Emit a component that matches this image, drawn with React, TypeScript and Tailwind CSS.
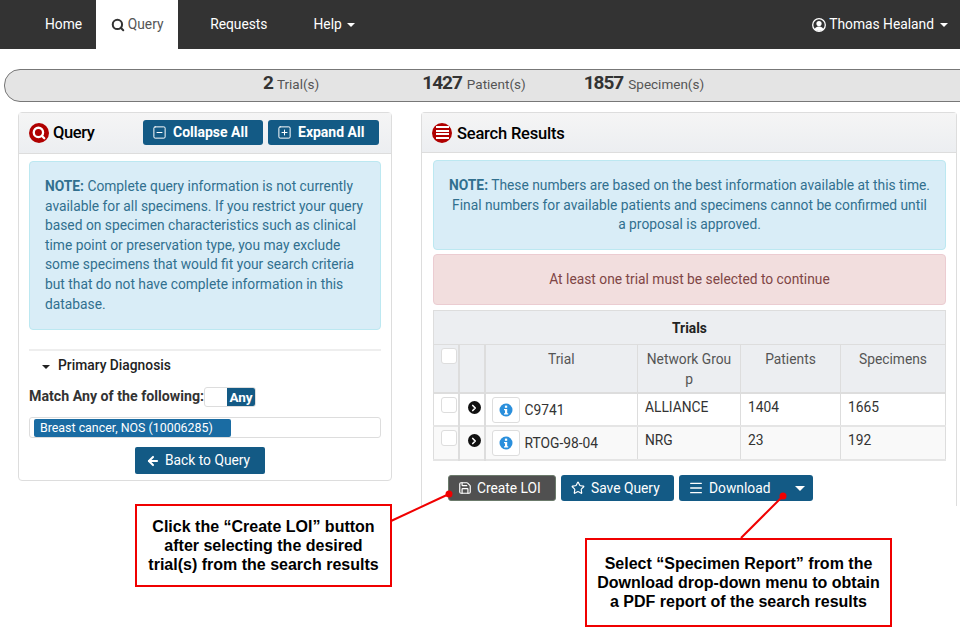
import React from 'react';
import { ArrowLeft, ChevronRight, Menu, Save, Search, SquareMinus, SquarePlus, Star } from 'lucide-react';

const Caret = ({ className = '' }: { className?: string }) => (
  <span className={`inline-block w-0 h-0 border-x-[4px] border-x-transparent border-t-[4px] ${className}`} />
);

const Check = () => <span className="block w-4 h-4 bg-white border border-[#ddd] rounded-[3px]" />;

const InfoDot = () => (
  <svg width="14" height="14" viewBox="0 0 14 14">
    <circle cx="7" cy="7" r="6.5" fill="#2a8fdc" />
    <rect x="5.9" y="2.6" width="2.3" height="2.2" fill="#fff" />
    <path d="M5 6h3.2v4.2H9.2v1.3H5v-1.3h1V7.3H5z" fill="#fff" />
  </svg>
);

const UserIcon = () => (
  <svg width="14" height="14" viewBox="0 0 14 14">
    <defs>
      <clipPath id="user-clip"><circle cx="7" cy="7" r="6" /></clipPath>
    </defs>
    <circle cx="7" cy="7" r="6.3" fill="none" stroke="#fff" strokeWidth="1.3" />
    <circle cx="7" cy="5.6" r="2.6" fill="#fff" />
    <ellipse cx="7" cy="12.4" rx="4.8" ry="3.8" fill="#fff" clipPath="url(#user-clip)" />
  </svg>
);

const rows = [
  { trial: 'C9741', group: 'ALLIANCE', patients: 1404, specimens: 1665, row: 'bg-white h-[33px]' },
  { trial: 'RTOG-98-04', group: 'NRG', patients: 23, specimens: 192, row: 'bg-[#f9f9f9] h-[34px]' },
];

const QueryPanel = () => (
  <section className="w-[374px] h-[369px] border border-[#ddd] rounded-[4px] shrink-0">
    <header className="h-[41px] flex items-center pl-[10px] pr-[12px] bg-gradient-to-b from-[#f5f5f5] to-[#eceef1] border-b border-[#ddd]">
      <span className="w-5 h-5 rounded-full bg-[#b00000] flex items-center justify-center">
        <Search size={14} strokeWidth={4} className="text-white" />
      </span>
      <h2 className="ml-[4px] mt-[1px] text-[16.5px] font-medium text-black tracking-[-0.4px]">Query</h2>
      <button className="ml-auto mb-[2px] h-[25px] w-[120px] rounded-[3px] bg-[#135a85] text-white text-[14px] font-bold flex items-center pl-[9px] gap-[6px]">
        <SquareMinus size={15} strokeWidth={1.6} />Collapse All
      </button>
      <button className="ml-[5px] mb-[2px] h-[25px] w-[111px] rounded-[3px] bg-[#135a85] text-white text-[14px] font-bold flex items-center pl-[9px] gap-[6px]">
        <SquarePlus size={15} strokeWidth={1.6} />Expand All
      </button>
    </header>
    <div className="pl-[10px] pr-[10px] pt-[7px]">
      <div className="h-[169px] bg-[#d9edf7] border border-[#bce8f1] rounded-[4px] pl-[15px] pr-[11px] pt-[15px] text-[13.8px] leading-[19.6px] text-[#31708f]">
        <b>NOTE:</b> Complete query information is not currently available for all specimens. If you restrict your query based on specimen characteristics such as clinical time point or preservation type, you may exclude some specimens that would fit your search criteria but that do not have complete information in this database.
      </div>
      <div className="mt-[19px] border-t-2 border-[#eee] pl-[13px] flex items-center gap-[8px] h-[30px] text-[13.8px] font-medium text-[#222]">
        <Caret className="border-t-[#222] mt-[3px]" />Primary Diagnosis
      </div>
      <div className="mt-[8px] flex items-center h-[20px] text-[14.2px] font-bold text-[#333]">
        Match Any of the following:
        <span className="w-[52px] h-[20px] border border-[#ddd] rounded-[3px] flex justify-end">
          <span className="w-[28px] bg-[#135a85] text-white text-[13.5px] leading-[18px] text-center rounded-r-[2px]">Any</span>
        </span>
      </div>
      <div className="mt-[10px] h-[21px] border border-[#ddd] rounded-[3px] pl-[4px] flex items-center">
        <span className="w-[197px] h-[18px] bg-[#1a6ca3] rounded-[2px] text-white text-[12.4px] leading-[18px] pl-[6px]">Breast cancer, NOS (10006285)</span>
      </div>
      <button className="mt-[9px] ml-[106px] h-[27px] w-[130px] rounded-[2px] bg-[#135a85] text-white text-[13.8px] flex items-center pl-[11px] gap-[5px]">
        <ArrowLeft size={14} strokeWidth={3.5} />Back to Query
      </button>
    </div>
  </section>
);

const ResultsPanel = () => (
  <section className="w-[536px] h-[394px] border-x border-t border-[#ddd] rounded-t-[4px] shrink-0">
    <header className="h-[40px] flex items-center pl-[10px] bg-gradient-to-b from-[#f5f5f5] to-[#eceef1] border-b border-[#ddd]">
      <span className="w-5 h-5 rounded-full bg-[#b00000] flex flex-col items-center justify-center gap-[1.5px]">
        <span className="w-[13px] h-[2px] bg-white" />
        <span className="w-[13px] h-[2px] bg-white" />
        <span className="w-[13px] h-[2px] bg-white" />
        <span className="w-[13px] h-[2px] bg-white" />
      </span>
      <h2 className="ml-[5px] mt-[3px] text-[16.5px] font-medium text-black tracking-[-0.2px]">Search Results</h2>
    </header>
    <div className="pl-[11px] pr-[10px] pt-[7px]">
      <div className="h-[90px] bg-[#d9edf7] border border-[#bce8f1] rounded-[4px] px-[14.5px] pt-[15px] text-[13.8px] leading-[19.6px] text-[#31708f] text-center">
        <b>NOTE:</b> These numbers are based on the best information available at this time. Final numbers for available patients and specimens cannot be confirmed until a proposal is approved.
      </div>
      <div className="mt-[4px] h-[51px] bg-[#f2dede] border border-[#ebccd1] rounded-[4px] flex items-center justify-center text-[13.8px] text-[#7f4545]">
        At least one trial must be selected to continue
      </div>
      <div className="mt-[5px] w-[513px] text-[13.8px] text-[#333]">
        <div className="h-[35px] pt-[2px] bg-[#eceef1] border border-[#ddd] flex items-center justify-center font-bold text-[#222]">Trials</div>
        <table className="w-full table-fixed border-collapse">
          <colgroup>
            <col className="w-[25px]" />
            <col className="w-[26px]" />
            <col className="w-[153px]" />
            <col className="w-[103px]" />
            <col className="w-[100px]" />
            <col />
          </colgroup>
          <thead>
            <tr className="h-[48px] bg-[#eceef1] text-[#555] font-normal align-top border-b-2 border-[#ddd]">
              <th className="border border-t-0 border-[#ddd] border-b-0 pl-[7px] pt-[3px] font-normal"><Check /></th>
              <th className="border-x-2 border-[#ddd] font-normal" />
              <th className="border-x border-[#ddd] font-normal pt-[4px] leading-[20px]">Trial</th>
              <th className="border-x border-[#ddd] font-normal pt-[4px] leading-[20px] px-[8px] break-all">Network Group</th>
              <th className="border-x border-[#ddd] font-normal pt-[4px] leading-[20px]">Patients</th>
              <th className="border-x border-[#ddd] font-normal pt-[4px] leading-[20px]">Specimens</th>
            </tr>
          </thead>
          <tbody>
            {rows.map((r) => (
              <tr key={r.trial} className={`border-b-2 border-[#e5e5e5] align-top ${r.row}`}>
                <td className="border-x border-[#ddd] pl-[7px] pt-[3px]"><Check /></td>
                <td className="border-x-2 border-[#ddd] pl-[8px] pt-[7px]">
                  <span className="w-[13px] h-[13px] rounded-full bg-[#111] flex items-center justify-center">
                    <ChevronRight size={10} strokeWidth={4} className="text-white" />
                  </span>
                </td>
                <td className="border-x border-[#ddd] pl-[6px] pt-[3px]">
                  <div className="flex items-center">
                    <span className="w-[28px] h-[26px] bg-white border border-[#ddd] rounded-[3px] flex items-center justify-center">
                      <InfoDot />
                    </span>
                    <span className="ml-[5px]">{r.trial}</span>
                  </div>
                </td>
                <td className="border-x border-[#ddd] pl-[7px] pt-[3px]">{r.group}</td>
                <td className="border-x border-[#ddd] pl-[7px] pt-[3px]">{r.patients}</td>
                <td className="border-x border-[#ddd] pl-[7px] pt-[3px]">{r.specimens}</td>
              </tr>
            ))}
          </tbody>
        </table>
      </div>
      <div className="mt-[14px] ml-[15px] flex gap-[5px] text-[13.8px] text-white">
        <button className="h-[26px] w-[108px] rounded-[3px] bg-[#505050] border border-[#6b7a6b] flex items-center pl-[9px] gap-[5px]">
          <Save size={14} />Create LOI
        </button>
        <button className="h-[26px] w-[113px] rounded-[3px] bg-[#135a85] flex items-center pl-[10px] gap-[6px]">
          <Star size={14} />Save Query
        </button>
        <button className="h-[26px] w-[134px] rounded-[3px] bg-[#135a85] flex items-center pl-[9px] gap-[5px]">
          <Menu size={16} />Download
          <span className="ml-[20px] w-0 h-0 border-x-[5px] border-x-transparent border-t-[5px] border-t-white" />
        </button>
      </div>
    </div>
  </section>
);

const Callout = ({ className, children }: { className: string; children: React.ReactNode }) => (
  <div className={`absolute bg-white border-2 border-[#f00000] flex items-center justify-center text-center font-['Liberation_Sans',Arial,sans-serif] font-bold text-[16px] leading-[19px] text-black ${className}`}>
    {children}
  </div>
);

export default function App() {
  return (
    <div className="relative w-[960px] h-[627px] overflow-hidden bg-white font-['Roboto',sans-serif]">
      <nav className="h-[49px] bg-[#333] flex items-center text-[13.8px] text-white">
        <a className="ml-[45px]">Home</a>
        <a className="ml-[14px] w-[82px] h-full bg-white text-[#555] flex items-center justify-center gap-[3px]">
          <Search size={14} strokeWidth={3.5} className="text-[#333]" />Query
        </a>
        <a className="ml-[32px]">Requests</a>
        <a className="ml-[46px] flex items-center gap-[5px]">Help <Caret className="border-t-white" /></a>
        <a className="ml-auto mr-[12px] flex items-center gap-[3px]">
          <UserIcon />Thomas Healand
          <Caret className="border-t-white ml-[3px]" />
        </a>
      </nav>
      <div className="mt-[20px] ml-[4px] w-[960px] h-[33px] bg-[#e4e4e4] border border-[#777] rounded-l-[16px] flex items-center pb-[4px]">
        <div className="ml-[258px] flex items-baseline gap-[4px]"><b className="text-[19px] font-bold text-[#333] tracking-[-1px]">2</b><span className="text-[13.5px] text-[#555]">Trial(s)</span></div>
        <div className="ml-[103px] flex items-baseline gap-[5px]"><b className="text-[19px] font-bold text-[#333] tracking-[-1px]">1427</b><span className="text-[13.5px] text-[#555]">Patient(s)</span></div>
        <div className="ml-[58px] flex items-baseline gap-[5px]"><b className="text-[19px] font-bold text-[#333] tracking-[-1px]">1857</b><span className="text-[13.5px] text-[#555]">Specimen(s)</span></div>
      </div>
      <main className="mt-[10px] ml-[18px] flex gap-[29px] items-start">
        <QueryPanel />
        <ResultsPanel />
      </main>

      <svg className="absolute inset-0 pointer-events-none" width="960" height="627">
        <line x1="391" y1="521" x2="449" y2="494" stroke="#f00000" strokeWidth="2" />
        <circle cx="449" cy="494" r="3.5" fill="#f00000" />
        <line x1="741" y1="538" x2="783" y2="496" stroke="#f00000" strokeWidth="2" />
        <circle cx="783" cy="496" r="3.5" fill="#f00000" />
      </svg>
      <Callout className="left-[135px] top-[504px] w-[257px] h-[83px]">
        <span>Click the “Create LOI” button<br />after selecting the desired<br />trial(s) from the search results</span>
      </Callout>
      <Callout className="left-[585px] top-[538px] w-[307px] h-[89px]">
        <span>Select “Specimen Report” from the<br />Download drop-down menu to obtain<br />a PDF report of the search results</span>
      </Callout>
    </div>
  );
}
